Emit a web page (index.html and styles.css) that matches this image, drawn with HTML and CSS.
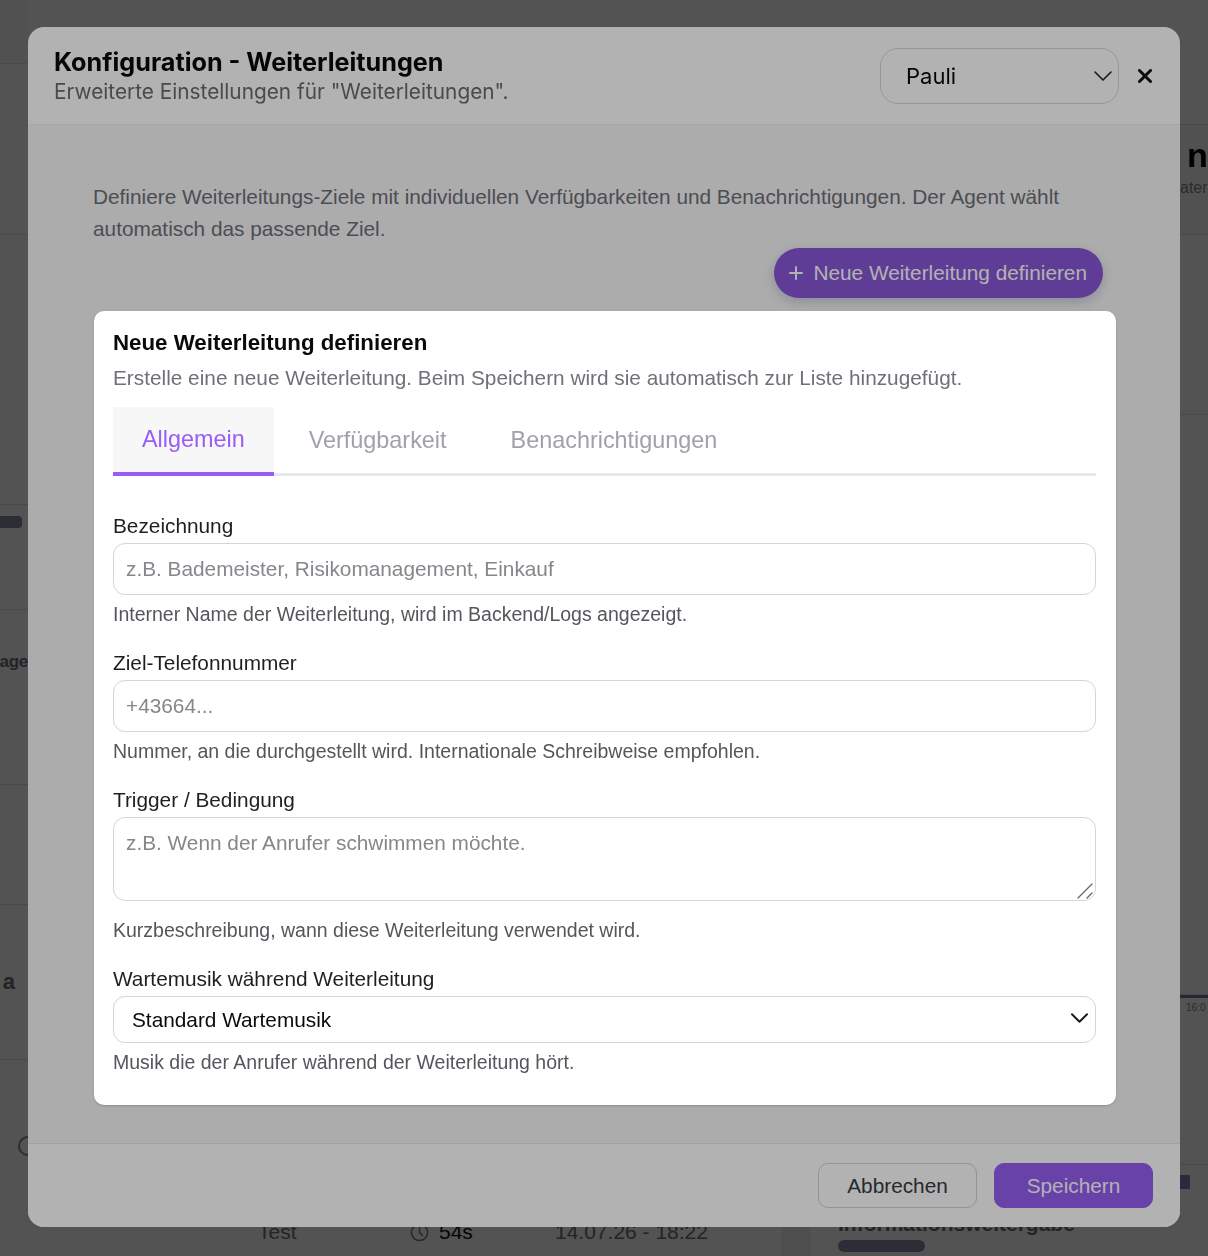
FILE: index.html
```html
<!DOCTYPE html>
<html lang="de">
<head>
<meta charset="utf-8">
<title>Konfiguration - Weiterleitungen</title>
<link rel="stylesheet" href="styles.css">
</head>
<body>

<!-- Underlying call log page -->
<div class="app">
  <aside class="edge edge-left">
    <div class="eb eb-top"></div>
    <div class="eb eb-1"></div>
    <div class="eb eb-2"></div>
    <div class="eb eb-3"><span class="edge-bar"></span></div>
    <div class="eb eb-4"><span class="edge-text edge-text-sm">age</span></div>
    <div class="eb eb-5"></div>
    <div class="eb eb-6"><span class="edge-text edge-text-end">a</span></div>
    <div class="eb eb-7"><span class="edge-icon"></span></div>
  </aside>

  <main class="app-main">
    <div class="call-row">
      <span class="call-name">Test</span>
      <span class="call-dur">
        <svg class="clock" viewBox="0 0 20 20" width="19" height="19"><circle cx="10" cy="10" r="8.5" fill="none" stroke="currentColor" stroke-width="1.6"/><path d="M10 5v5l3 3" fill="none" stroke="currentColor" stroke-width="1.6" stroke-linecap="round"/></svg>
        54s
      </span>
      <span class="call-date">14.07.26 - 18:22</span>
      <div class="call-panel">
        <span class="call-tag">Informationsweitergabe</span>
        <span class="call-bar"></span>
      </div>
    </div>
  </main>

  <aside class="edge edge-right">
    <div class="rb rb-top"></div>
    <div class="rb rb-head"><span class="rb-title">n</span><span class="rb-sub">ater</span></div>
    <div class="rb rb-1"></div>
    <div class="rb rb-2"></div>
    <div class="rb rb-time"><span>16:0</span></div>
    <div class="rb rb-3"><span class="rb-bar"></span></div>
  </aside>
</div>

<div class="backdrop"></div>

<!-- Configuration modal -->
<section class="modal">
  <header class="modal-head">
    <div class="head-text">
      <h1 class="modal-title">Konfiguration - Weiterleitungen</h1>
      <p class="modal-sub">Erweiterte Einstellungen für "Weiterleitungen".</p>
    </div>
    <div class="head-actions">
      <div class="agent-select">
        <span>Pauli</span>
        <svg viewBox="0 0 18 10" width="18" height="10"><path d="M1 1l8 8 8-8" fill="none" stroke="#222" stroke-width="1.6" stroke-linecap="round" stroke-linejoin="round"/></svg>
      </div>
      <button class="close-btn" type="button" aria-label="Schließen">
        <svg viewBox="0 0 14 14" width="14" height="14"><path d="M1.5 1.5l11 11M12.5 1.5l-11 11" stroke="#111" stroke-width="3" stroke-linecap="round"/></svg>
      </button>
    </div>
  </header>

  <div class="modal-body">
    <p class="intro">Definiere Weiterleitungs-Ziele mit individuellen Verfügbarkeiten und Benachrichtigungen. Der Agent wählt automatisch das passende Ziel.</p>
    <div class="intro-actions">
      <button class="add-btn" type="button">
        <svg viewBox="0 0 14 14" width="14" height="14"><path d="M7 1v12M1 7h12" stroke="currentColor" stroke-width="2" stroke-linecap="round"/></svg>
        Neue Weiterleitung definieren
      </button>
    </div>
  </div>

  <footer class="modal-foot">
    <button class="btn btn-ghost" type="button">Abbrechen</button>
    <button class="btn btn-primary" type="button">Speichern</button>
  </footer>
</section>

<div class="backdrop backdrop-top"></div>

<!-- New forwarding dialog -->
<section class="dialog">
  <h2 class="dialog-title">Neue Weiterleitung definieren</h2>
  <p class="dialog-sub">Erstelle eine neue Weiterleitung. Beim Speichern wird sie automatisch zur Liste hinzugefügt.</p>

  <nav class="tabs">
    <span class="tab tab-active">Allgemein</span>
    <span class="tab">Verfügbarkeit</span>
    <span class="tab">Benachrichtigungen</span>
  </nav>

  <form class="form">
    <div class="field">
      <label class="label" for="f-name">Bezeichnung</label>
      <input class="control" id="f-name" type="text" placeholder="z.B. Bademeister, Risikomanagement, Einkauf">
      <p class="help">Interner Name der Weiterleitung, wird im Backend/Logs angezeigt.</p>
    </div>
    <div class="field">
      <label class="label" for="f-phone">Ziel-Telefonnummer</label>
      <input class="control" id="f-phone" type="text" placeholder="+43664...">
      <p class="help">Nummer, an die durchgestellt wird. Internationale Schreibweise empfohlen.</p>
    </div>
    <div class="field">
      <label class="label" for="f-trigger">Trigger / Bedingung</label>
      <div class="area-wrap">
        <textarea class="control control-area" id="f-trigger" placeholder="z.B. Wenn der Anrufer schwimmen möchte."></textarea>
        <svg class="area-grip" viewBox="0 0 16 16" width="16" height="16"><path d="M15 1L1 15M15 10l-5 5" stroke="#6b6b70" stroke-width="1.4" stroke-linecap="round"/></svg>
      </div>
      <p class="help help-after-area">Kurzbeschreibung, wann diese Weiterleitung verwendet wird.</p>
    </div>
    <div class="field">
      <label class="label" for="f-music">Wartemusik während Weiterleitung</label>
      <div class="select-wrap">
        <select class="control control-select" id="f-music">
          <option>Standard Wartemusik</option>
        </select>
        <svg class="select-chevron" viewBox="0 0 18 10" width="17" height="10"><path d="M1 1l8 8 8-8" fill="none" stroke="#1a1a1a" stroke-width="2" stroke-linecap="round" stroke-linejoin="round"/></svg>
      </div>
      <p class="help">Musik die der Anrufer während der Weiterleitung hört.</p>
    </div>
  </form>
</section>

</body>
</html>
```

FILE: styles.css
```css
* {
  box-sizing: border-box;
  margin: 0;
  padding: 0;
}

html,
body {
  width: 1208px;
  height: 1256px;
  overflow: hidden;
}

body {
  background: #ffffff;
  font-family: "Liberation Sans", Arial, sans-serif;
  color: #111827;
}

button,
input,
select,
textarea {
  font: inherit;
  color: inherit;
}

/* ---------- underlying page ---------- */

.app {
  display: flex;
  height: 1256px;
}

.edge {
  width: 28px;
  flex: none;
  display: flex;
  flex-direction: column;
  overflow: hidden;
}

.eb {
  display: flex;
  justify-content: flex-end;
  align-items: center;
  white-space: nowrap;
  border-bottom: 1px solid #e2e4e8;
}

.eb-top { height: 64px; background: #fbfbfb; }
.eb-1 { height: 171px; }
.eb-2 { height: 270px; }
.eb-3 { height: 105px; align-items: flex-start; padding-top: 11px; }
.eb-4 { height: 175px; align-items: flex-start; padding-top: 42px; }
.eb-5 { height: 120px; }
.eb-6 { height: 155px; }
.eb-7 { height: 196px; border-bottom: 0; align-items: flex-start; padding-top: 76px; }

.edge-bar {
  display: block;
  flex: none;
  width: 60px;
  height: 12px;
  margin-right: 6px;
  border-radius: 4px;
  background: #8b8ba8;
}

.edge-text {
  font-size: 22px;
  font-weight: 700;
  color: #6e6e7c;
}

.edge-text-sm {
  font-size: 17px;
  letter-spacing: -0.3px;
}

.edge-text-end {
  margin-right: 13px;
}

.edge-icon {
  flex: none;
  width: 20px;
  height: 20px;
  margin-right: -10px;
  border: 2px solid #8a8a98;
  border-radius: 50%;
}

.app-main {
  flex: 1;
  display: flex;
  flex-direction: column;
  justify-content: flex-end;
}

.call-row {
  display: grid;
  grid-template-columns: 152px 145px 227px 1fr;
  align-items: center;
  height: 48px;
  padding-left: 230px;
  font-size: 21px;
  color: #6e6e7c;
}

.call-dur {
  display: flex;
  align-items: center;
  gap: 10px;
  color: #111;
}

.clock {
  color: #7b7b88;
}

.call-panel {
  align-self: stretch;
  display: flex;
  flex-direction: column;
  justify-content: flex-end;
  gap: 6px;
  padding: 0 0 4px 28px;
  border-left: 28px solid #f1f1f3;
}

.call-tag {
  font-size: 21px;
  font-weight: 700;
  color: #6e6e7c;
  line-height: 1;
}

.call-bar {
  width: 87px;
  height: 12px;
  border-radius: 6px;
  background: #8d89a8;
}

.rb {
  display: flex;
  flex-direction: column;
  white-space: nowrap;
  border-bottom: 1px solid #e2e4e8;
}

.rb-top { height: 125px; }
.rb-head { height: 110px; padding: 12px 0 0 7px; background: #fbfbfb; }
.rb-1 { height: 180px; }
.rb-2 { height: 580px; }
.rb-time {
  height: 170px;
  border-top: 3px solid #7d7a9e;
  padding: 4px 0 0 6px;
  font-size: 10px;
  color: #8b8b98;
}
.rb-3 { flex: 1; border-bottom: 0; padding-top: 10px; }

.rb-title {
  font-size: 34px;
  font-weight: 700;
  line-height: 36px;
  color: #000;
}

.rb-sub {
  margin-top: 6px;
  margin-left: -7px;
  font-size: 16px;
  color: #85859a;
}

.rb-bar {
  width: 10px;
  height: 14px;
  background: #8580c0;
}

/* ---------- overlays ---------- */

.backdrop {
  position: fixed;
  inset: 0;
  background: rgba(0, 0, 0, 0.535);
}

.backdrop-top {
  background: rgba(0, 0, 0, 0.3);
}

/* ---------- configuration modal ---------- */

.modal {
  position: fixed;
  left: 28px;
  top: 27px;
  width: 1152px;
  height: 1200px;
  display: flex;
  flex-direction: column;
  background: #ffffff;
  border-radius: 16px;
  overflow: hidden;
}

.modal-head {
  height: 98px;
  flex: none;
  display: flex;
  align-items: center;
  justify-content: space-between;
  padding: 0 28px 0 26px;
  border-bottom: 1px solid #eceef1;
}

.modal-title {
  font-family: Inter, "Liberation Sans", sans-serif;
  font-size: 25.2px;
  font-weight: 700;
  line-height: 32px;
  color: #0a0a0a;
}

.modal-sub {
  font-family: Inter, "Liberation Sans", sans-serif;
  font-size: 20.8px;
  line-height: 28px;
  color: #6b6b70;
}

.head-actions {
  display: flex;
  align-items: center;
  gap: 19px;
}

.agent-select {
  width: 239px;
  height: 56px;
  display: flex;
  align-items: center;
  justify-content: space-between;
  padding: 0 6px 0 25px;
  border: 1px solid #d6d7dc;
  border-radius: 18px;
  font-family: Inter, "Liberation Sans", sans-serif;
  font-size: 22px;
  color: #0a0a0a;
}

.close-btn {
  display: flex;
  border: 0;
  background: none;
}

.modal-body {
  flex: 1;
  padding: 56px 77px 0 65px;
  background: #f7f7f8;
}

.intro {
  font-size: 20.8px;
  line-height: 32px;
  color: #6e6f78;
}

.intro-actions {
  display: flex;
  justify-content: flex-end;
  margin-top: 3px;
}

.add-btn {
  height: 50px;
  display: flex;
  align-items: center;
  gap: 10px;
  padding: 0 16px 0 15px;
  border: 0;
  border-radius: 25px;
  background: #8857d6;
  color: #ffffff;
  font-size: 20.8px;
  box-shadow: 0 4px 12px rgba(80, 60, 140, 0.25);
}

.modal-foot {
  height: 84px;
  flex: none;
  display: flex;
  align-items: center;
  justify-content: flex-end;
  gap: 17px;
  padding: 0 27px;
  background: #ffffff;
  border-top: 1px solid #e6e7ea;
}

.btn {
  width: 159px;
  height: 45px;
  border-radius: 10px;
  font-size: 20.8px;
}

.btn-ghost {
  background: #ffffff;
  border: 1px solid #d1d3d9;
  color: #3a3a3f;
}

.btn-primary {
  background: #955df3;
  border: 1px solid #955df3;
  color: #ffffff;
}

/* ---------- new forwarding dialog ---------- */

.dialog {
  position: fixed;
  top: 311px;
  left: 94px;
  width: 1022px;
  padding: 18px 20px 32px 19px;
  background: #ffffff;
  border-radius: 10px;
  box-shadow: 0 1px 2px rgba(0, 0, 0, 0.18);
}

.dialog-title {
  font-size: 22.3px;
  font-weight: 700;
  line-height: 28px;
  color: #0a0a0a;
}

.dialog-sub {
  margin-top: 5px;
  font-size: 20.8px;
  line-height: 31px;
  color: #6f7079;
}

.tabs {
  display: flex;
  gap: 6px;
  margin-top: 14px;
  border-bottom: 3px solid #e7e8eb;
}

.tab {
  height: 66px;
  display: flex;
  align-items: center;
  padding: 0 29px;
  font-size: 23.4px;
  color: #a1a1aa;
}

.tab-active {
  margin-bottom: -3px;
  height: 69px;
  border-bottom: 4px solid #9b5cf3;
  background: #f7f7f7;
  color: #9b5cf3;
}

.form {
  display: flex;
  flex-direction: column;
  gap: 26px;
  padding-top: 38px;
}

.field {
  display: flex;
  flex-direction: column;
}

.label {
  font-size: 20.8px;
  line-height: 24px;
  color: #1f1f23;
}

.control {
  display: block;
  width: 100%;
  height: 52px;
  margin-top: 5px;
  padding: 0 12px;
  border: 1px solid #d4d5da;
  border-radius: 12px;
  background: #ffffff;
  font-size: 20.8px;
  color: #111;
  outline: none;
}

.control::placeholder {
  color: #86868c;
}

.area-wrap {
  position: relative;
}

.control-area {
  height: 84px;
  padding: 13px 12px;
  line-height: 24px;
  resize: none;
}

.area-grip {
  position: absolute;
  right: 3px;
  bottom: 2px;
}

.select-wrap {
  position: relative;
}

.control-select {
  height: 47px;
  padding: 0 18px;
  appearance: none;
  -webkit-appearance: none;
  color: #0a0a0a;
}

.select-chevron {
  position: absolute;
  right: 8px;
  top: 22px;
}

.help {
  margin-top: 8px;
  font-size: 19.5px;
  line-height: 22px;
  color: #55565c;
}

.help-after-area {
  margin-top: 18px;
}
```
